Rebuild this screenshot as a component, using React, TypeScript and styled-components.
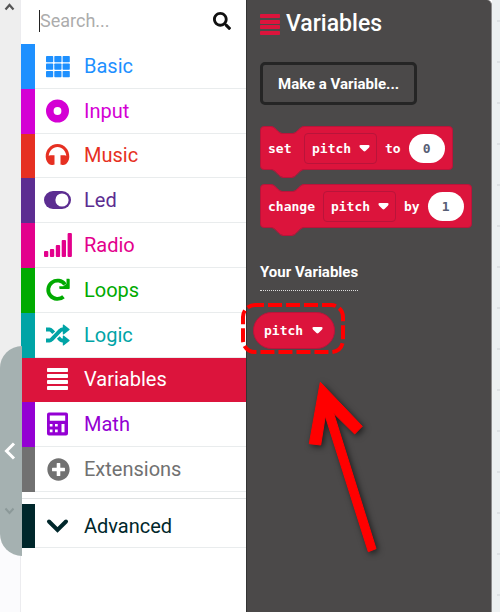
import React from "react";
import styled, { createGlobalStyle } from "styled-components";
import { FaSearch, FaPlusCircle } from "react-icons/fa";

const RED = "#dc143c";
const PANEL = "#4b4949";

const GlobalStyle = createGlobalStyle`
  *, *::before, *::after { box-sizing: border-box; }
  body { margin: 0; background: #fff; font-family: Roboto, "Liberation Sans", sans-serif; }
  button, input, select { font: inherit; color: inherit; margin: 0; }
`;

const Page = styled.div`
  display: flex;
  min-height: 100vh;
  overflow: hidden;
`;

const Gutter = styled.div`
  position: relative;
  flex: 0 0 21px;
  display: flex;
  flex-direction: column;
  background: #fbfbfd;
  border-right: 1px solid #ececef;
`;

const ScrollTrack = styled.div`
  display: flex;
  justify-content: center;
  height: 520px;
  padding: 3px 2px 0 0;
  background: #eeeeee;
`;

const CollapseButton = styled.button`
  position: absolute;
  z-index: 2;
  top: 346px;
  left: 0;
  display: flex;
  align-items: center;
  width: 22px;
  height: 210px;
  padding: 0 0 0 4px;
  border: 0;
  border-radius: 22px 0 0 22px;
  background: #a5b1b1;
`;

const FaintArrow = styled.svg`
  position: absolute;
  left: 4px;
  top: 161px;
`;

const Toolbox = styled.nav`
  flex: 0 1 225px;
  min-width: 0;
  background: #fff;
`;

const SearchBar = styled.label`
  display: flex;
  align-items: center;
  height: 44px;
  padding: 0 15px 3px 18px;
  color: #111;
`;

const SearchInput = styled.input`
  flex: 1;
  min-width: 0;
  height: 22px;
  padding: 0;
  border: 0;
  border-left: 1px solid #222;
  outline: 0;
  background: transparent;
  font-size: 18px;
  &::placeholder { color: #acacac; opacity: 1; }
`;

const CategoryGrid = styled.div`
  display: grid;
  grid-auto-rows: 1fr;
  height: 448px;
`;

const AdvancedGroup = styled.div`
  margin-top: 6px;
  padding-top: 5px;
  border-top: 1px solid #dfe2e3;
`;

const Category = styled.button<{ $color: string; $selected?: boolean }>`
  display: flex;
  align-items: center;
  width: 100%;
  min-height: 44px;
  padding: 0;
  border: 0;
  text-align: left;
  font-size: 20px;
  line-height: 24px;
  background: ${(p) => (p.$selected ? p.$color : "#fff")};
  color: ${(p) => (p.$selected ? "#fff" : p.$color)};
  &::before {
    content: "";
    flex: 0 0 14px;
    align-self: stretch;
    background: ${(p) => p.$color};
  }
`;

const CategoryBody = styled.span<{ $selected?: boolean }>`
  flex: 1;
  align-self: stretch;
  display: flex;
  align-items: center;
  gap: 12px;
  padding-left: 9px;
  border-bottom: 1px solid ${(p) => (p.$selected ? RED : "#e9eced")};
`;

const IconBox = styled.span`
  display: flex;
  justify-content: center;
  width: 28px;
`;

const Flyout = styled.main`
  position: relative;
  flex: 0 1 246px;
  min-width: 0;
  padding: 10px 13px;
  background: ${PANEL};
  border-left: 1px solid #333;
  border-right: 1px solid #8c8c8c;
  border-radius: 0 5px 0 0;
  color: #fff;
`;

const Workspace = styled.div`
  flex: 1 1 8px;
  background: repeating-linear-gradient(#ecf0f1 0 20px, #dde1e3 20px 22px, #ecf0f1 22px 41px) right / 3px 100% no-repeat,
    #ecf0f1;
`;

const Title = styled.h1`
  display: flex;
  align-items: center;
  gap: 6px;
  margin: 0;
  font-size: 23px;
  font-weight: 500;
  line-height: 28px;
`;

const MakeButton = styled.button`
  display: block;
  height: 43px;
  margin-top: 24px;
  padding: 0 15px;
  border: 3px solid #252525;
  border-radius: 5px;
  background: ${PANEL};
  font-size: 15px;
  font-weight: 700;
`;

const BlockList = styled.div`
  display: flex;
  flex-direction: column;
  align-items: flex-start;
  gap: 14px;
  margin-top: 21px;
`;

const Block = styled.div`
  position: relative;
  display: flex;
  align-items: center;
  gap: 8px;
  height: 44px;
  padding: 0 7px;
  border: 1px solid #b9143a;
  border-radius: 4px;
  background: ${RED};
  font-family: "DejaVu Sans Mono", monospace;
  font-size: 13px;
  font-weight: 700;
  white-space: nowrap;
`;

const Notch = styled.svg<{ $edge: "top" | "bottom" }>`
  position: absolute;
  left: 10px;
  ${(p) => (p.$edge === "top" ? "top: -1px;" : "bottom: -9px;")}
`;

const Word = styled.span`
  min-width: 28px;
`;

const Field = styled.span<{ $round?: boolean }>`
  position: relative;
  display: inline-flex;
  select {
    appearance: none;
    height: ${(p) => (p.$round ? 37 : 31)}px;
    padding: 0 ${(p) => (p.$round ? 30 : 24)}px 0 ${(p) => (p.$round ? 10 : 7)}px;
    border: 1px solid #b9143a;
    border-radius: ${(p) => (p.$round ? 19 : 4)}px;
    outline: 0;
    background: ${RED};
    font-family: "DejaVu Sans Mono", monospace;
    font-size: 13px;
    font-weight: 700;
  }
  svg {
    position: absolute;
    right: ${(p) => (p.$round ? 12 : 7)}px;
    top: ${(p) => (p.$round ? 15 : 12)}px;
    pointer-events: none;
  }
`;

const NumberInput = styled.input`
  width: 36px;
  height: 29px;
  padding: 0;
  border: 0;
  border-radius: 15px;
  background: #fff;
  color: #575e75;
  text-align: center;
`;

const Subheading = styled.h2`
  width: fit-content;
  margin: 34px 0 0;
  padding-bottom: 8px;
  border-bottom: 1px dotted #ddd;
  font-size: 15px;
  font-weight: 700;
  line-height: 20px;
`;

const Reporter = styled.div`
  position: relative;
  width: fit-content;
  margin: 21px 0 0 -7px;
`;

const Highlight = styled.svg`
  position: absolute;
  left: -13px;
  top: -10px;
  pointer-events: none;
`;

const Pointer = styled.svg`
  position: absolute;
  left: 52px;
  top: 64px;
  overflow: visible;
  pointer-events: none;
  filter: drop-shadow(2px 2px 3px rgba(0, 0, 0, 0.6));
`;

const Glyph = ({ children }: { children: React.ReactNode }) => (
  <svg width="28" height="24" viewBox="0 0 28 24" fill="currentColor" aria-hidden="true">
    {children}
  </svg>
);

const Bars = () => (
  <svg width="22" height="22" viewBox="0 0 22 22" fill="currentColor" aria-hidden="true">
    {[0, 6, 12, 18].map((y) => (
      <rect key={y} x="0" y={y} width="21" height="4" rx="0.8" />
    ))}
  </svg>
);

const icons: Record<string, React.ReactNode> = {
  Basic: (
    <Glyph>
      {[2, 9.5, 17].map((y) =>
        [2, 10.3, 18.6].map((x) => <rect key={`${x}-${y}`} x={x} y={y} width="7.2" height="6.2" rx="0.7" />)
      )}
    </Glyph>
  ),
  Input: (
    <Glyph>
      <circle cx="13.5" cy="12" r="7.7" fill="none" stroke="currentColor" strokeWidth="7.6" />
    </Glyph>
  ),
  Music: (
    <Glyph>
      <path d="M1.700 14C1.400 7 6.500 1 13.500 1S25.600 7 25.300 14c-.2 4-2.200 6.300-4 7.500-.8.6-4 .5-4.800-.1V12.200h4c.8 0 1.400.2 1.800.5C21.500 7.500 18.200 4 13.500 4S5.500 7.500 4.700 12.700c.4-.3 1-.5 1.800-.5h4v9.200c-.8.6-4 .7-4.800.1-1.800-1.200-3.800-3.500-4-7.500z" />
    </Glyph>
  ),
  Led: (
    <Glyph>
      <rect x="0" y="3" width="27" height="18" rx="9" />
      <circle cx="18" cy="12" r="6.6" fill="#fff" />
    </Glyph>
  ),
  Radio: (
    <Glyph>
      {[6, 8, 12, 17, 24].map((h, i) => (
        <rect key={h} x={i * 5.9} y={24 - h} width="4.3" height={h} rx="1" />
      ))}
    </Glyph>
  ),
  Loops: (
    <Glyph>
      <path d="M19.500 18.700A9.200 9.200 0 1 1 21 6.500" fill="none" stroke="currentColor" strokeWidth="3.8" />
      <path d="M22.500.8h2.500q.7 0 .7.700v8.700q0 .8-.8.8h-8.800q-.8 0-.8-.8V8.200l4 .1 3.200-2.500z" />
    </Glyph>
  ),
  Logic: (
    <Glyph>
      <path
        d="M2 6.500h3.500q1.200 0 2 .9L9.700 9.800M14.300 14.500l2 2.200q.8.800 2 .8H21M2 17.500h3.500q1.200 0 2-.9l8.800-9.200q.8-.9 2-.9H21"
        fill="none"
        stroke="currentColor"
        strokeWidth="3.8"
      />
      <path d="M18.800 2.300q0-1.500 1.200-.5l5.400 4.200q.6.500 0 1L20 11.200q-1.200 1-1.200-.5zM18.800 13.300q0-1.500 1.200-.5l5.400 4.200q.6.500 0 1L20 22.200q-1.200 1-1.200-.5z" />
    </Glyph>
  ),
  Variables: <Bars />,
  Math: (
    <Glyph>
      <path
        fillRule="evenodd"
        d="M5 .5h17q2 0 2 2v19q0 2-2 2H5q-2 0-2-2v-19q0-2 2-2zM5.800 3.500v5.300h15.400V3.500zM5.800 12v2.500h2.700V12zM11 12v2.500h2.700V12zM5.800 17.500v2.700h2.700v-2.700zM11 17.500v2.700h2.700v-2.700zM17.500 12v8.200h3V12z"
      />
    </Glyph>
  ),
  Extensions: <FaPlusCircle size={23} aria-hidden="true" />,
  Advanced: (
    <Glyph>
      <path d="M5 7.500l8.500 8.500L22 7.500" fill="none" stroke="currentColor" strokeWidth="4" strokeLinecap="round" />
    </Glyph>
  ),
};

const categories = [
  { name: "Basic", color: "#1e90ff" },
  { name: "Input", color: "#d400d4" },
  { name: "Music", color: "#e63022" },
  { name: "Led", color: "#5c2d91" },
  { name: "Radio", color: "#e3008c" },
  { name: "Loops", color: "#00aa00" },
  { name: "Logic", color: "#00a4a6" },
  { name: "Variables", color: RED },
  { name: "Math", color: "#9400d3" },
  { name: "Extensions", color: "#717171" },
];

const CategoryRow = ({ name, color }: { name: string; color: string }) => {
  const selected = name === "Variables";
  return (
    <Category type="button" $color={color} $selected={selected} aria-pressed={selected}>
      <CategoryBody $selected={selected}>
        <IconBox>{icons[name]}</IconBox>
        {name}
      </CategoryBody>
    </Category>
  );
};

const VariableSelect = ({ label, round }: { label: string; round?: boolean }) => (
  <Field $round={round}>
    <select aria-label={label}>
      <option>pitch</option>
    </select>
    <svg width="11" height="7" viewBox="0 0 11 7" aria-hidden="true">
      <path d="M1.500 0h8q1.500 0 1 1.500-.3.900-1.200 1.800L6.500 6.100q-1 .9-2 0L1.700 3.300Q.8 2.400.5 1.500 0 0 1.500 0z" fill="#fff" />
    </svg>
  </Field>
);

const BlockRow = ({ verb, joiner, value }: { verb: string; joiner: string; value: string }) => (
  <Block>
    <Notch $edge="top" width="33" height="8" aria-hidden="true">
      <path d="M0 0h33q-2 0-4 2l-3 3q-2 2-4 2H11q-2 0-4-2L4 2Q2 0 0 0z" fill={PANEL} />
      <path d="M0 .5q2 0 4 2l3 3q2 2 4 2h11q2 0 4-2l3-3q2-2 4-2" fill="none" stroke="#b9143a" />
    </Notch>
    <Notch $edge="bottom" width="33" height="9" aria-hidden="true">
      <path d="M0 0h33q-2 0-4 2l-4 4q-2 2-4 2h-9q-2 0-4-2L4 2Q2 0 0 0z" fill={RED} />
      <path d="M0 .5q2 0 4 2l4 4q2 2 4 2h9q2 0 4-2l4-4q2-2 4-2" fill="none" stroke="#b9143a" />
    </Notch>
    <Word>{verb}</Word>
    <VariableSelect label={`Variable to ${verb}`} />
    <span>{joiner}</span>
    <NumberInput defaultValue={value} aria-label={`${verb} ${joiner}`} />
  </Block>
);

export default function App() {
  return (
    <Page>
      <GlobalStyle />
      <Gutter>
        <ScrollTrack>
          <svg width="11" height="8" viewBox="0 0 11 8" aria-hidden="true">
            <path d="M1.500 6.500l4-4.500 4 4.500" fill="none" stroke="#555" strokeWidth="2.2" />
          </svg>
        </ScrollTrack>
        <CollapseButton type="button" aria-label="Collapse the simulator">
          <svg width="12" height="18" viewBox="0 0 12 18" aria-hidden="true">
            <path d="M10 1.500L2.500 9l7.500 7.500" fill="none" stroke="#fff" strokeWidth="3" />
          </svg>
          <FaintArrow width="11" height="8" viewBox="0 0 11 8" aria-hidden="true">
            <path d="M1.500 1.500l4 4.500 4-4.500" fill="none" stroke="#8c9999" strokeWidth="2" />
          </FaintArrow>
        </CollapseButton>
      </Gutter>
      <Toolbox aria-label="Toolbox">
        <SearchBar>
          <SearchInput type="text" placeholder="Search..." aria-label="Search" />
          <FaSearch size={18} aria-hidden="true" />
        </SearchBar>
        <CategoryGrid>
          {categories.map((c) => (
            <CategoryRow key={c.name} {...c} />
          ))}
        </CategoryGrid>
        <AdvancedGroup>
          <CategoryRow name="Advanced" color="#00272b" />
        </AdvancedGroup>
      </Toolbox>
      <Flyout>
        <Title>
          <svg width="20" height="21" viewBox="0 0 20 21" fill={RED} aria-hidden="true">
            {[0, 6, 11, 17].map((y) => (
              <rect key={y} y={y} width="20" height="4" rx="0.8" />
            ))}
          </svg>
          Variables
        </Title>
        <MakeButton type="button">Make a Variable...</MakeButton>
        <BlockList>
          <BlockRow verb="set" joiner="to" value="0" />
          <BlockRow verb="change" joiner="by" value="1" />
        </BlockList>
        <Subheading>Your Variables</Subheading>
        <Reporter>
          <VariableSelect label="Variable" round />
          <Highlight width="106" height="54" viewBox="0 0 106 54" aria-hidden="true">
            <rect
              x="3"
              y="3"
              width="100"
              height="47"
              rx="12"
              fill="none"
              stroke="#f00"
              strokeWidth="4"
              strokeDasharray="14 4"
              strokeDashoffset="5"
            />
          </Highlight>
          <Pointer width="70" height="175" viewBox="305 376 70 175" aria-hidden="true">
            <path
              d="M320.300 382.300L362.300 426.300 354.700 434 333.700 413.300 376 548.700 368.300 551.700 325.300 416 320.700 445 309.300 443.700z"
              fill="#f00"
              stroke="#f00"
              strokeLinejoin="round"
            />
          </Pointer>
        </Reporter>
      </Flyout>
      <Workspace />
    </Page>
  );
}
